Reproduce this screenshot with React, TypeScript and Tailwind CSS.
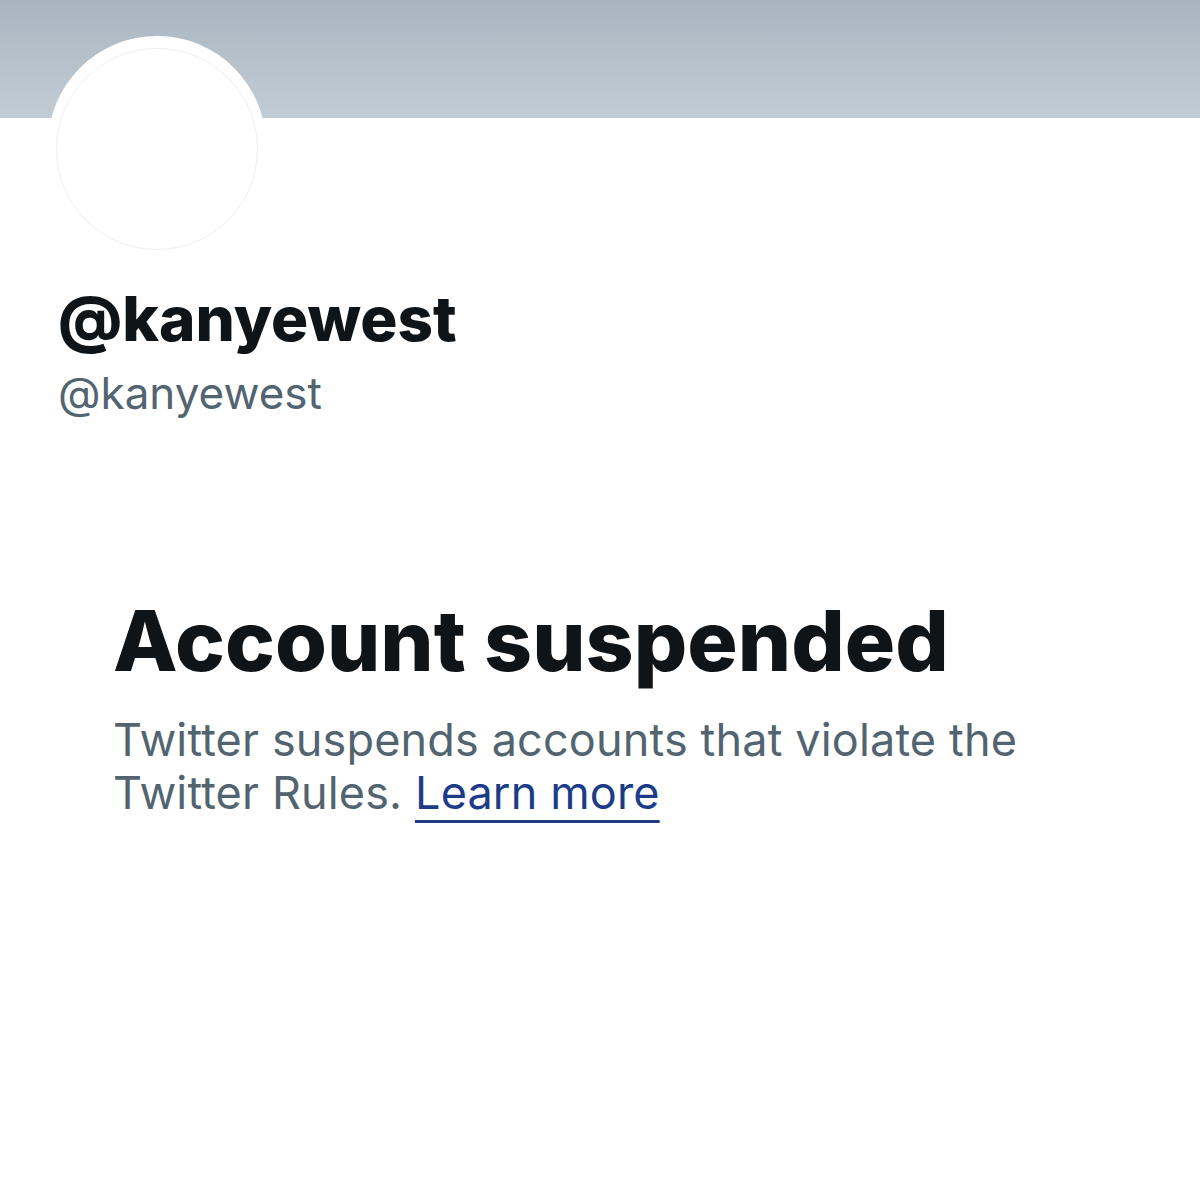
export default function App() {
  return (
    <div className="w-[1200px] h-[1200px] bg-white overflow-hidden font-['Inter','Liberation_Sans',sans-serif]">
      {/* banner */}
      <div className="h-[118px] bg-gradient-to-b from-[#a8b5c0] to-[#c2ccd5]" />

      {/* avatar */}
      <div className="ml-[48px] -mt-[82px] w-[218px] h-[218px] rounded-full bg-white pt-[12px] pb-[4px] px-[8px]">
        <div className="w-full h-full rounded-full border border-[#eceff1]" />
      </div>

      {/* names */}
      <div className="ml-[58px] mt-[28px]">
        <div className="text-[62px] leading-[74px] font-extrabold text-[#0f1419]">@kanyewest</div>
        <div className="mt-[11px] text-[44px] leading-[52px] text-[#536471]">@kanyewest</div>
      </div>

      {/* suspended notice */}
      <div className="ml-[113px] mt-[172px] w-[1000px]">
        <h1 className="text-[84px] leading-[100px] font-extrabold text-[#0f1419]">Account suspended</h1>
        <p className="mt-[22px] text-[45px] leading-[53px] tracking-[0.15px] text-[#536471]">
          Twitter suspends accounts that violate the
          <br />
          Twitter Rules.{" "}
          <a href="#" className="text-[#1c3c88] underline decoration-[3px] underline-offset-[11px]">
            Learn more
          </a>
        </p>
      </div>
    </div>
  );
}
